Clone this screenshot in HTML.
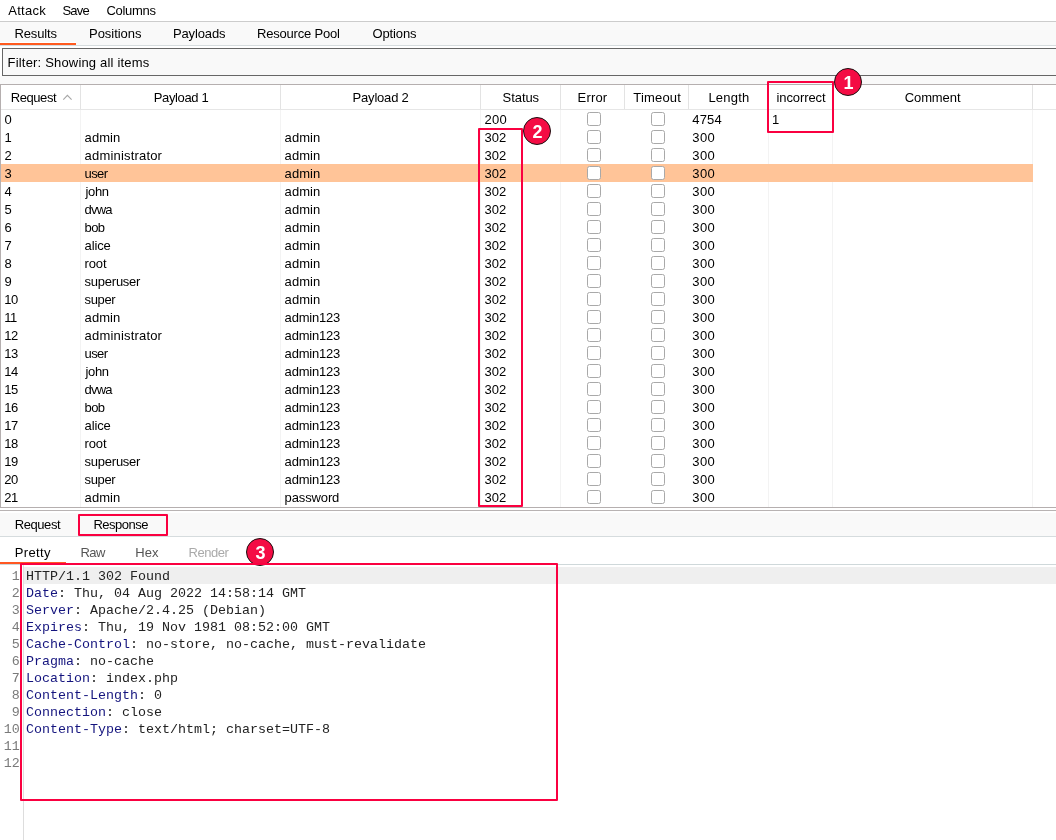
<!DOCTYPE html>
<html><head><meta charset="utf-8">
<style>
html,body{margin:0;padding:0;width:1056px;height:840px;overflow:hidden;background:#fff;}
body{position:relative;font-family:"Liberation Sans", sans-serif;}
#root{position:absolute;left:0;top:0;width:1056px;height:840px;overflow:hidden;background:#fff;will-change:transform;}
.t{position:absolute;white-space:pre;line-height:18px;}
.r{position:absolute;}
.cb{position:absolute;width:14px;height:14px;box-sizing:border-box;border:1px solid #a9a9a9;border-radius:2.5px;background:#fff;}
.m{position:absolute;font-family:"Liberation Mono", monospace;font-size:13.33px;line-height:17px;white-space:pre;}
.ln{left:0;width:19.7px;text-align:right;color:#7a7a7a;}
.circ{position:absolute;width:28.5px;height:28.5px;box-sizing:border-box;border-radius:50%;background:#f40c44;border:1.3px solid #1a1010;color:#fff;font-weight:bold;font-size:18px;line-height:27px;text-align:center;font-family:"Liberation Sans", sans-serif;}
.circ span{position:relative;top:1.2px;left:0.5px;}
</style></head><body><div id="root">
<div class="r" style="left:0px;top:0px;width:1056px;height:21px;background:#ffffff;"></div>
<div class="r" style="left:0px;top:21px;width:1056px;height:1px;background:#cccccc;"></div>
<div class="t" style="left:8.30px;top:2.30px;font-size:13px;color:#000000;letter-spacing:0.255px;">Attack</div>
<div class="t" style="left:62.40px;top:2.30px;font-size:13px;color:#000000;letter-spacing:-0.800px;">Save</div>
<div class="t" style="left:106.50px;top:2.30px;font-size:13px;color:#000000;letter-spacing:-0.316px;">Columns</div>
<div class="r" style="left:0px;top:22px;width:1056px;height:23px;background:#f9f9f9;"></div>
<div class="r" style="left:0px;top:42px;width:76px;height:1px;background:#ffffff;"></div>
<div class="r" style="left:0px;top:43px;width:76px;height:2px;background:#ff5a1f;"></div>
<div class="r" style="left:0px;top:45px;width:1056px;height:1px;background:#d6dcde;"></div>
<div class="r" style="left:0px;top:46px;width:1056px;height:2px;background:#ffffff;"></div>
<div class="t" style="left:14.50px;top:25.40px;font-size:13px;color:#000000;letter-spacing:-0.141px;">Results</div>
<div class="t" style="left:89.00px;top:25.40px;font-size:13px;color:#000000;letter-spacing:-0.031px;">Positions</div>
<div class="t" style="left:173.00px;top:25.40px;font-size:13px;color:#000000;letter-spacing:-0.140px;">Payloads</div>
<div class="t" style="left:257.00px;top:25.40px;font-size:13px;color:#000000;letter-spacing:-0.198px;">Resource Pool</div>
<div class="t" style="left:372.50px;top:25.40px;font-size:13px;color:#000000;letter-spacing:-0.134px;">Options</div>
<div class="r" style="left:2px;top:48px;width:1060px;height:28px;background:#f9f9f9;box-sizing:border-box;border:1px solid #666;"></div>
<div class="t" style="left:7.60px;top:54.40px;font-size:13px;color:#000000;letter-spacing:0.180px;">Filter: Showing all items</div>
<div class="r" style="left:0px;top:76px;width:1056px;height:8px;background:#f9f9f9;"></div>
<div class="r" style="left:0px;top:84px;width:1056px;height:424px;background:#ffffff;"></div>
<div class="r" style="left:0px;top:84px;width:1056px;height:1px;background:#b5afaf;"></div>
<div class="r" style="left:0px;top:84px;width:1px;height:424px;background:#b5afaf;"></div>
<div class="r" style="left:0px;top:507px;width:1056px;height:1px;background:#b5afaf;"></div>
<div class="r" style="left:1px;top:109px;width:1055px;height:1px;background:#e6e6e6;"></div>
<div class="r" style="left:80px;top:85px;width:1px;height:24px;background:#e3e3e3;"></div>
<div class="r" style="left:80px;top:110px;width:1px;height:397px;background:#f3f3f3;"></div>
<div class="r" style="left:280px;top:85px;width:1px;height:24px;background:#e3e3e3;"></div>
<div class="r" style="left:280px;top:110px;width:1px;height:397px;background:#f3f3f3;"></div>
<div class="r" style="left:480px;top:85px;width:1px;height:24px;background:#e3e3e3;"></div>
<div class="r" style="left:480px;top:110px;width:1px;height:397px;background:#f3f3f3;"></div>
<div class="r" style="left:560px;top:85px;width:1px;height:24px;background:#e3e3e3;"></div>
<div class="r" style="left:560px;top:110px;width:1px;height:397px;background:#f3f3f3;"></div>
<div class="r" style="left:624px;top:85px;width:1px;height:24px;background:#e3e3e3;"></div>
<div class="r" style="left:688px;top:85px;width:1px;height:24px;background:#e3e3e3;"></div>
<div class="r" style="left:768px;top:85px;width:1px;height:24px;background:#e3e3e3;"></div>
<div class="r" style="left:768px;top:110px;width:1px;height:397px;background:#f3f3f3;"></div>
<div class="r" style="left:832px;top:85px;width:1px;height:24px;background:#e3e3e3;"></div>
<div class="r" style="left:832px;top:110px;width:1px;height:397px;background:#f3f3f3;"></div>
<div class="r" style="left:1032px;top:85px;width:1px;height:24px;background:#e3e3e3;"></div>
<div class="r" style="left:1032px;top:110px;width:1px;height:397px;background:#f3f3f3;"></div>
<div class="t" style="left:153.80px;top:89.20px;font-size:13px;color:#000000;letter-spacing:-0.374px;">Payload 1</div>
<div class="t" style="left:352.60px;top:89.20px;font-size:13px;color:#000000;letter-spacing:-0.199px;">Payload 2</div>
<div class="t" style="left:502.60px;top:89.20px;font-size:13px;color:#000000;letter-spacing:-0.071px;">Status</div>
<div class="t" style="left:577.60px;top:89.20px;font-size:13px;color:#000000;letter-spacing:0.160px;">Error</div>
<div class="t" style="left:633.30px;top:89.20px;font-size:13px;color:#000000;letter-spacing:0.172px;">Timeout</div>
<div class="t" style="left:708.40px;top:89.20px;font-size:13px;color:#000000;letter-spacing:0.214px;">Length</div>
<div class="t" style="left:776.50px;top:89.20px;font-size:13px;color:#000000;letter-spacing:-0.105px;">incorrect</div>
<div class="t" style="left:904.70px;top:89.20px;font-size:13px;color:#000000;letter-spacing:-0.089px;">Comment</div>
<div class="t" style="left:10.70px;top:89.20px;font-size:13px;color:#000000;letter-spacing:-0.418px;">Request</div>
<svg class="r" style="left:62px;top:93px" width="12" height="9" viewBox="0 0 12 9"><path d="M1.3 6.6 L5.4 2.3 L9.6 6.6" fill="none" stroke="#a6a6a6" stroke-width="1.1"/></svg>
<div class="t" style="left:4.60px;top:111.30px;font-size:13px;color:#000000;">0</div>
<div class="t" style="left:484.50px;top:111.30px;font-size:13px;color:#000000;letter-spacing:0.270px;">200</div>
<div class="t" style="left:692.30px;top:111.30px;font-size:13px;color:#000000;letter-spacing:0.137px;">4754</div>
<div class="t" style="left:772.00px;top:111.30px;font-size:13px;color:#000000;">1</div>
<div class="cb" style="left:587px;top:112px"></div>
<div class="cb" style="left:651px;top:112px"></div>
<div class="t" style="left:4.60px;top:129.30px;font-size:13px;color:#000000;">1</div>
<div class="t" style="left:84.60px;top:129.30px;font-size:13px;color:#000000;letter-spacing:0.056px;">admin</div>
<div class="t" style="left:284.60px;top:129.30px;font-size:13px;color:#000000;letter-spacing:0.056px;">admin</div>
<div class="t" style="left:484.50px;top:129.30px;font-size:13px;color:#000000;letter-spacing:0.020px;">302</div>
<div class="t" style="left:692.30px;top:129.30px;font-size:13px;color:#000000;letter-spacing:0.370px;">300</div>
<div class="cb" style="left:587px;top:130px"></div>
<div class="cb" style="left:651px;top:130px"></div>
<div class="t" style="left:4.60px;top:147.30px;font-size:13px;color:#000000;">2</div>
<div class="t" style="left:84.60px;top:147.30px;font-size:13px;color:#000000;letter-spacing:0.183px;">administrator</div>
<div class="t" style="left:284.60px;top:147.30px;font-size:13px;color:#000000;letter-spacing:0.056px;">admin</div>
<div class="t" style="left:484.50px;top:147.30px;font-size:13px;color:#000000;letter-spacing:0.020px;">302</div>
<div class="t" style="left:692.30px;top:147.30px;font-size:13px;color:#000000;letter-spacing:0.370px;">300</div>
<div class="cb" style="left:587px;top:148px"></div>
<div class="cb" style="left:651px;top:148px"></div>
<div class="r" style="left:1px;top:164px;width:1032px;height:18px;background:#ffc498;"></div>
<div class="t" style="left:4.60px;top:165.30px;font-size:13px;color:#000000;">3</div>
<div class="t" style="left:84.60px;top:165.30px;font-size:13px;color:#000000;letter-spacing:-0.620px;">user</div>
<div class="t" style="left:284.60px;top:165.30px;font-size:13px;color:#000000;letter-spacing:0.056px;">admin</div>
<div class="t" style="left:484.50px;top:165.30px;font-size:13px;color:#000000;letter-spacing:0.020px;">302</div>
<div class="t" style="left:692.30px;top:165.30px;font-size:13px;color:#000000;letter-spacing:0.370px;">300</div>
<div class="cb" style="left:587px;top:166px"></div>
<div class="cb" style="left:651px;top:166px"></div>
<div class="t" style="left:4.60px;top:183.30px;font-size:13px;color:#000000;">4</div>
<div class="t" style="left:85.60px;top:183.30px;font-size:13px;color:#000000;letter-spacing:-0.416px;">john</div>
<div class="t" style="left:284.60px;top:183.30px;font-size:13px;color:#000000;letter-spacing:0.056px;">admin</div>
<div class="t" style="left:484.50px;top:183.30px;font-size:13px;color:#000000;letter-spacing:0.020px;">302</div>
<div class="t" style="left:692.30px;top:183.30px;font-size:13px;color:#000000;letter-spacing:0.370px;">300</div>
<div class="cb" style="left:587px;top:184px"></div>
<div class="cb" style="left:651px;top:184px"></div>
<div class="t" style="left:4.60px;top:201.30px;font-size:13px;color:#000000;">5</div>
<div class="t" style="left:84.60px;top:201.30px;font-size:13px;color:#000000;letter-spacing:-0.806px;">dvwa</div>
<div class="t" style="left:284.60px;top:201.30px;font-size:13px;color:#000000;letter-spacing:0.056px;">admin</div>
<div class="t" style="left:484.50px;top:201.30px;font-size:13px;color:#000000;letter-spacing:0.020px;">302</div>
<div class="t" style="left:692.30px;top:201.30px;font-size:13px;color:#000000;letter-spacing:0.370px;">300</div>
<div class="cb" style="left:587px;top:202px"></div>
<div class="cb" style="left:651px;top:202px"></div>
<div class="t" style="left:4.60px;top:219.30px;font-size:13px;color:#000000;">6</div>
<div class="t" style="left:84.60px;top:219.30px;font-size:13px;color:#000000;letter-spacing:-0.630px;">bob</div>
<div class="t" style="left:284.60px;top:219.30px;font-size:13px;color:#000000;letter-spacing:0.056px;">admin</div>
<div class="t" style="left:484.50px;top:219.30px;font-size:13px;color:#000000;letter-spacing:0.020px;">302</div>
<div class="t" style="left:692.30px;top:219.30px;font-size:13px;color:#000000;letter-spacing:0.370px;">300</div>
<div class="cb" style="left:587px;top:220px"></div>
<div class="cb" style="left:651px;top:220px"></div>
<div class="t" style="left:4.60px;top:237.30px;font-size:13px;color:#000000;">7</div>
<div class="t" style="left:84.60px;top:237.30px;font-size:13px;color:#000000;letter-spacing:-0.152px;">alice</div>
<div class="t" style="left:284.60px;top:237.30px;font-size:13px;color:#000000;letter-spacing:0.056px;">admin</div>
<div class="t" style="left:484.50px;top:237.30px;font-size:13px;color:#000000;letter-spacing:0.020px;">302</div>
<div class="t" style="left:692.30px;top:237.30px;font-size:13px;color:#000000;letter-spacing:0.370px;">300</div>
<div class="cb" style="left:587px;top:238px"></div>
<div class="cb" style="left:651px;top:238px"></div>
<div class="t" style="left:4.60px;top:255.30px;font-size:13px;color:#000000;">8</div>
<div class="t" style="left:84.60px;top:255.30px;font-size:13px;color:#000000;letter-spacing:-0.163px;">root</div>
<div class="t" style="left:284.60px;top:255.30px;font-size:13px;color:#000000;letter-spacing:0.056px;">admin</div>
<div class="t" style="left:484.50px;top:255.30px;font-size:13px;color:#000000;letter-spacing:0.020px;">302</div>
<div class="t" style="left:692.30px;top:255.30px;font-size:13px;color:#000000;letter-spacing:0.370px;">300</div>
<div class="cb" style="left:587px;top:256px"></div>
<div class="cb" style="left:651px;top:256px"></div>
<div class="t" style="left:4.60px;top:273.30px;font-size:13px;color:#000000;">9</div>
<div class="t" style="left:84.60px;top:273.30px;font-size:13px;color:#000000;letter-spacing:-0.247px;">superuser</div>
<div class="t" style="left:284.60px;top:273.30px;font-size:13px;color:#000000;letter-spacing:0.056px;">admin</div>
<div class="t" style="left:484.50px;top:273.30px;font-size:13px;color:#000000;letter-spacing:0.020px;">302</div>
<div class="t" style="left:692.30px;top:273.30px;font-size:13px;color:#000000;letter-spacing:0.370px;">300</div>
<div class="cb" style="left:587px;top:274px"></div>
<div class="cb" style="left:651px;top:274px"></div>
<div class="t" style="left:4.30px;top:291.30px;font-size:13px;color:#000000;letter-spacing:-0.6px;">10</div>
<div class="t" style="left:84.60px;top:291.30px;font-size:13px;color:#000000;letter-spacing:-0.372px;">super</div>
<div class="t" style="left:284.60px;top:291.30px;font-size:13px;color:#000000;letter-spacing:0.056px;">admin</div>
<div class="t" style="left:484.50px;top:291.30px;font-size:13px;color:#000000;letter-spacing:0.020px;">302</div>
<div class="t" style="left:692.30px;top:291.30px;font-size:13px;color:#000000;letter-spacing:0.370px;">300</div>
<div class="cb" style="left:587px;top:292px"></div>
<div class="cb" style="left:651px;top:292px"></div>
<div class="t" style="left:4.30px;top:309.30px;font-size:13px;color:#000000;letter-spacing:-0.6px;">11</div>
<div class="t" style="left:84.60px;top:309.30px;font-size:13px;color:#000000;letter-spacing:0.056px;">admin</div>
<div class="t" style="left:284.60px;top:309.30px;font-size:13px;color:#000000;letter-spacing:-0.195px;">admin123</div>
<div class="t" style="left:484.50px;top:309.30px;font-size:13px;color:#000000;letter-spacing:0.020px;">302</div>
<div class="t" style="left:692.30px;top:309.30px;font-size:13px;color:#000000;letter-spacing:0.370px;">300</div>
<div class="cb" style="left:587px;top:310px"></div>
<div class="cb" style="left:651px;top:310px"></div>
<div class="t" style="left:4.30px;top:327.30px;font-size:13px;color:#000000;letter-spacing:-0.6px;">12</div>
<div class="t" style="left:84.60px;top:327.30px;font-size:13px;color:#000000;letter-spacing:0.183px;">administrator</div>
<div class="t" style="left:284.60px;top:327.30px;font-size:13px;color:#000000;letter-spacing:-0.195px;">admin123</div>
<div class="t" style="left:484.50px;top:327.30px;font-size:13px;color:#000000;letter-spacing:0.020px;">302</div>
<div class="t" style="left:692.30px;top:327.30px;font-size:13px;color:#000000;letter-spacing:0.370px;">300</div>
<div class="cb" style="left:587px;top:328px"></div>
<div class="cb" style="left:651px;top:328px"></div>
<div class="t" style="left:4.30px;top:345.30px;font-size:13px;color:#000000;letter-spacing:-0.6px;">13</div>
<div class="t" style="left:84.60px;top:345.30px;font-size:13px;color:#000000;letter-spacing:-0.620px;">user</div>
<div class="t" style="left:284.60px;top:345.30px;font-size:13px;color:#000000;letter-spacing:-0.195px;">admin123</div>
<div class="t" style="left:484.50px;top:345.30px;font-size:13px;color:#000000;letter-spacing:0.020px;">302</div>
<div class="t" style="left:692.30px;top:345.30px;font-size:13px;color:#000000;letter-spacing:0.370px;">300</div>
<div class="cb" style="left:587px;top:346px"></div>
<div class="cb" style="left:651px;top:346px"></div>
<div class="t" style="left:4.30px;top:363.30px;font-size:13px;color:#000000;letter-spacing:-0.6px;">14</div>
<div class="t" style="left:85.60px;top:363.30px;font-size:13px;color:#000000;letter-spacing:-0.416px;">john</div>
<div class="t" style="left:284.60px;top:363.30px;font-size:13px;color:#000000;letter-spacing:-0.195px;">admin123</div>
<div class="t" style="left:484.50px;top:363.30px;font-size:13px;color:#000000;letter-spacing:0.020px;">302</div>
<div class="t" style="left:692.30px;top:363.30px;font-size:13px;color:#000000;letter-spacing:0.370px;">300</div>
<div class="cb" style="left:587px;top:364px"></div>
<div class="cb" style="left:651px;top:364px"></div>
<div class="t" style="left:4.30px;top:381.30px;font-size:13px;color:#000000;letter-spacing:-0.6px;">15</div>
<div class="t" style="left:84.60px;top:381.30px;font-size:13px;color:#000000;letter-spacing:-0.806px;">dvwa</div>
<div class="t" style="left:284.60px;top:381.30px;font-size:13px;color:#000000;letter-spacing:-0.195px;">admin123</div>
<div class="t" style="left:484.50px;top:381.30px;font-size:13px;color:#000000;letter-spacing:0.020px;">302</div>
<div class="t" style="left:692.30px;top:381.30px;font-size:13px;color:#000000;letter-spacing:0.370px;">300</div>
<div class="cb" style="left:587px;top:382px"></div>
<div class="cb" style="left:651px;top:382px"></div>
<div class="t" style="left:4.30px;top:399.30px;font-size:13px;color:#000000;letter-spacing:-0.6px;">16</div>
<div class="t" style="left:84.60px;top:399.30px;font-size:13px;color:#000000;letter-spacing:-0.630px;">bob</div>
<div class="t" style="left:284.60px;top:399.30px;font-size:13px;color:#000000;letter-spacing:-0.195px;">admin123</div>
<div class="t" style="left:484.50px;top:399.30px;font-size:13px;color:#000000;letter-spacing:0.020px;">302</div>
<div class="t" style="left:692.30px;top:399.30px;font-size:13px;color:#000000;letter-spacing:0.370px;">300</div>
<div class="cb" style="left:587px;top:400px"></div>
<div class="cb" style="left:651px;top:400px"></div>
<div class="t" style="left:4.30px;top:417.30px;font-size:13px;color:#000000;letter-spacing:-0.6px;">17</div>
<div class="t" style="left:84.60px;top:417.30px;font-size:13px;color:#000000;letter-spacing:-0.152px;">alice</div>
<div class="t" style="left:284.60px;top:417.30px;font-size:13px;color:#000000;letter-spacing:-0.195px;">admin123</div>
<div class="t" style="left:484.50px;top:417.30px;font-size:13px;color:#000000;letter-spacing:0.020px;">302</div>
<div class="t" style="left:692.30px;top:417.30px;font-size:13px;color:#000000;letter-spacing:0.370px;">300</div>
<div class="cb" style="left:587px;top:418px"></div>
<div class="cb" style="left:651px;top:418px"></div>
<div class="t" style="left:4.30px;top:435.30px;font-size:13px;color:#000000;letter-spacing:-0.6px;">18</div>
<div class="t" style="left:84.60px;top:435.30px;font-size:13px;color:#000000;letter-spacing:-0.163px;">root</div>
<div class="t" style="left:284.60px;top:435.30px;font-size:13px;color:#000000;letter-spacing:-0.195px;">admin123</div>
<div class="t" style="left:484.50px;top:435.30px;font-size:13px;color:#000000;letter-spacing:0.020px;">302</div>
<div class="t" style="left:692.30px;top:435.30px;font-size:13px;color:#000000;letter-spacing:0.370px;">300</div>
<div class="cb" style="left:587px;top:436px"></div>
<div class="cb" style="left:651px;top:436px"></div>
<div class="t" style="left:4.30px;top:453.30px;font-size:13px;color:#000000;letter-spacing:-0.6px;">19</div>
<div class="t" style="left:84.60px;top:453.30px;font-size:13px;color:#000000;letter-spacing:-0.247px;">superuser</div>
<div class="t" style="left:284.60px;top:453.30px;font-size:13px;color:#000000;letter-spacing:-0.195px;">admin123</div>
<div class="t" style="left:484.50px;top:453.30px;font-size:13px;color:#000000;letter-spacing:0.020px;">302</div>
<div class="t" style="left:692.30px;top:453.30px;font-size:13px;color:#000000;letter-spacing:0.370px;">300</div>
<div class="cb" style="left:587px;top:454px"></div>
<div class="cb" style="left:651px;top:454px"></div>
<div class="t" style="left:4.30px;top:471.30px;font-size:13px;color:#000000;letter-spacing:-0.6px;">20</div>
<div class="t" style="left:84.60px;top:471.30px;font-size:13px;color:#000000;letter-spacing:-0.372px;">super</div>
<div class="t" style="left:284.60px;top:471.30px;font-size:13px;color:#000000;letter-spacing:-0.195px;">admin123</div>
<div class="t" style="left:484.50px;top:471.30px;font-size:13px;color:#000000;letter-spacing:0.020px;">302</div>
<div class="t" style="left:692.30px;top:471.30px;font-size:13px;color:#000000;letter-spacing:0.370px;">300</div>
<div class="cb" style="left:587px;top:472px"></div>
<div class="cb" style="left:651px;top:472px"></div>
<div class="t" style="left:4.30px;top:489.30px;font-size:13px;color:#000000;letter-spacing:-0.6px;">21</div>
<div class="t" style="left:84.60px;top:489.30px;font-size:13px;color:#000000;letter-spacing:0.056px;">admin</div>
<div class="t" style="left:284.60px;top:489.30px;font-size:13px;color:#000000;letter-spacing:-0.130px;">password</div>
<div class="t" style="left:484.50px;top:489.30px;font-size:13px;color:#000000;letter-spacing:0.020px;">302</div>
<div class="t" style="left:692.30px;top:489.30px;font-size:13px;color:#000000;letter-spacing:0.370px;">300</div>
<div class="cb" style="left:587px;top:490px"></div>
<div class="cb" style="left:651px;top:490px"></div>
<div class="r" style="left:0px;top:508px;width:1056px;height:2px;background:#ffffff;"></div>
<div class="r" style="left:0px;top:510px;width:1056px;height:1px;background:#b8b3b3;"></div>
<div class="r" style="left:0px;top:511px;width:1056px;height:2px;background:#ffffff;"></div>
<div class="r" style="left:0px;top:513px;width:1056px;height:23px;background:#f9f9f9;"></div>
<div class="r" style="left:0px;top:536px;width:1056px;height:1px;background:#d6dcde;"></div>
<div class="t" style="left:14.70px;top:516.10px;font-size:13px;color:#000000;letter-spacing:-0.418px;">Request</div>
<div class="t" style="left:93.50px;top:516.10px;font-size:13px;color:#000000;letter-spacing:-0.515px;">Response</div>
<div class="r" style="left:0px;top:537px;width:1056px;height:26px;background:#ffffff;"></div>
<div class="t" style="left:14.70px;top:544.20px;font-size:13px;color:#000000;letter-spacing:0.369px;">Pretty</div>
<div class="t" style="left:80.40px;top:544.20px;font-size:13px;color:#555555;letter-spacing:-0.509px;">Raw</div>
<div class="t" style="left:135.30px;top:544.20px;font-size:13px;color:#555555;letter-spacing:0.041px;">Hex</div>
<div class="t" style="left:188.60px;top:544.20px;font-size:13px;color:#aaaaaa;letter-spacing:-0.482px;">Render</div>
<div class="r" style="left:0px;top:562px;width:66px;height:2px;background:#ff5722;"></div>
<div class="r" style="left:0px;top:564px;width:1056px;height:1px;background:#cfd8da;"></div>
<div class="r" style="left:0px;top:565px;width:1056px;height:275px;background:#ffffff;"></div>
<div class="r" style="left:23px;top:565px;width:1px;height:275px;background:#dddddd;"></div>
<div class="r" style="left:24px;top:567px;width:1032px;height:17px;background:#efefef;"></div>
<div class="m ln" style="top:568px">1</div>
<div class="m" style="left:26px;top:568px;color:#222222">HTTP/1.1 302 Found</div>
<div class="m ln" style="top:585px">2</div>
<div class="m" style="left:26px;top:585px;color:#222222"><span style="color:#14147e">Date</span>: Thu, 04 Aug 2022 14:58:14 GMT</div>
<div class="m ln" style="top:602px">3</div>
<div class="m" style="left:26px;top:602px;color:#222222"><span style="color:#14147e">Server</span>: Apache/2.4.25 (Debian)</div>
<div class="m ln" style="top:619px">4</div>
<div class="m" style="left:26px;top:619px;color:#222222"><span style="color:#14147e">Expires</span>: Thu, 19 Nov 1981 08:52:00 GMT</div>
<div class="m ln" style="top:636px">5</div>
<div class="m" style="left:26px;top:636px;color:#222222"><span style="color:#14147e">Cache-Control</span>: no-store, no-cache, must-revalidate</div>
<div class="m ln" style="top:653px">6</div>
<div class="m" style="left:26px;top:653px;color:#222222"><span style="color:#14147e">Pragma</span>: no-cache</div>
<div class="m ln" style="top:670px">7</div>
<div class="m" style="left:26px;top:670px;color:#222222"><span style="color:#14147e">Location</span>: index.php</div>
<div class="m ln" style="top:687px">8</div>
<div class="m" style="left:26px;top:687px;color:#222222"><span style="color:#14147e">Content-Length</span>: 0</div>
<div class="m ln" style="top:704px">9</div>
<div class="m" style="left:26px;top:704px;color:#222222"><span style="color:#14147e">Connection</span>: close</div>
<div class="m ln" style="top:721px">10</div>
<div class="m" style="left:26px;top:721px;color:#222222"><span style="color:#14147e">Content-Type</span>: text/html; charset=UTF-8</div>
<div class="m ln" style="top:738px">11</div>
<div class="m" style="left:26px;top:738px;color:#222222"></div>
<div class="m ln" style="top:755px">12</div>
<div class="m" style="left:26px;top:755px;color:#222222"></div>
<div class="r" style="left:767px;top:81px;width:67px;height:52px;box-sizing:border-box;border:2px solid #fa0040;border-radius:1px"></div>
<div class="r" style="left:478px;top:128px;width:45px;height:379px;box-sizing:border-box;border:2px solid #fa0040;border-radius:1px"></div>
<div class="r" style="left:78px;top:514px;width:90px;height:22px;box-sizing:border-box;border:2px solid #fa0040;border-radius:1px"></div>
<div class="circ" style="left:833.75px;top:67.75px"><span>1</span></div>
<div class="circ" style="left:522.75px;top:116.75px"><span>2</span></div>
<div class="circ" style="left:245.75px;top:537.75px"><span>3</span></div>
<div class="r" style="left:20px;top:563px;width:538px;height:238px;box-sizing:border-box;border:2px solid #fa0040;border-radius:1px"></div>
</div></body></html>
